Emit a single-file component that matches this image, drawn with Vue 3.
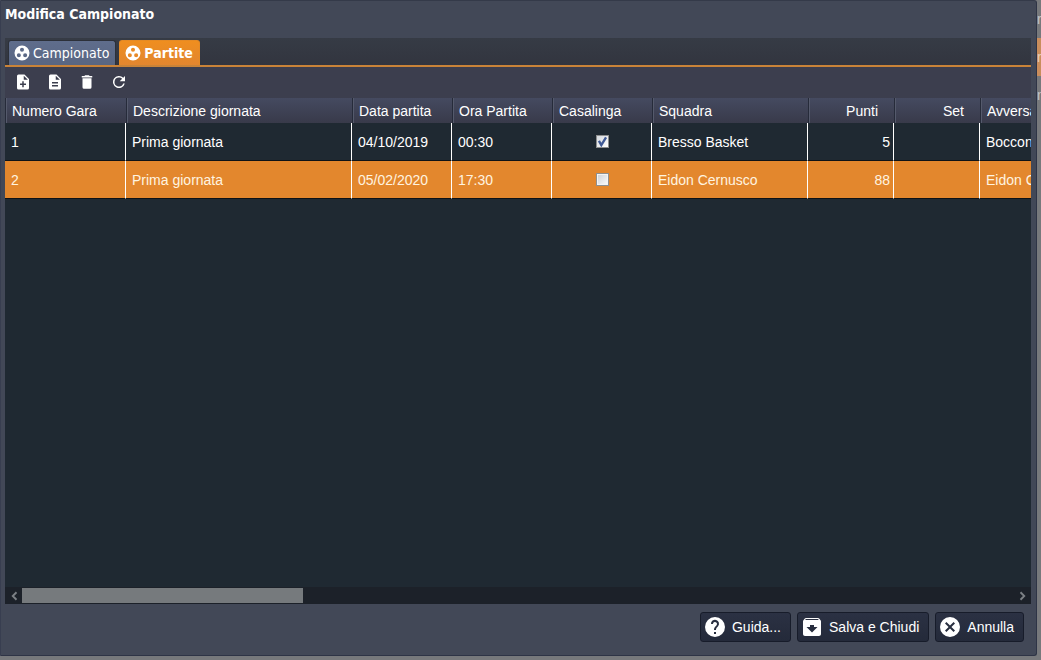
<script setup>
import { ref } from 'vue'

const columns = [
  { key: 'num', label: 'Numero Gara', cls: 'c-num' },
  { key: 'desc', label: 'Descrizione giornata', cls: 'c-desc' },
  { key: 'date', label: 'Data partita', cls: 'c-std' },
  { key: 'time', label: 'Ora Partita', cls: 'c-std' },
  { key: 'home', label: 'Casalinga', cls: 'c-std' },
  { key: 'team', label: 'Squadra', cls: 'c-team' },
  { key: 'points', label: 'Punti', cls: 'c-score', right: true },
  { key: 'set', label: 'Set', cls: 'c-score', right: true },
  { key: 'rival', label: 'Avversario', cls: 'c-team' },
]
const rows = ref([
  { num: '1', desc: 'Prima giornata', date: '04/10/2019', time: '00:30', home: true, team: 'Bresso Basket', points: '5', set: '', rival: 'Bocconi' },
  { num: '2', desc: 'Prima giornata', date: '05/02/2020', time: '17:30', home: false, team: 'Eidon Cernusco', points: '88', set: '', rival: 'Eidon Cernusco' },
])
const selected = ref(1)
const tabs = ['Campionato', 'Partite']
const active = ref(1)
const tools = [
  { label: 'Nuovo', path: 'M14 2H6a2 2 0 0 0-2 2v16a2 2 0 0 0 2 2h12a2 2 0 0 0 2-2V8l-6-6zm2 14h-3v3h-2v-3H8v-2h3v-3h2v3h3v2zm-3-7V3.500L18.500 9H13z' },
  { label: 'Modifica', path: 'M14 2H6a2 2 0 0 0-2 2v16a2 2 0 0 0 2 2h12a2 2 0 0 0 2-2V8l-6-6zm2 16H8v-2h8v2zm0-4H8v-2h8v2zm-3-5V3.500L18.500 9H13z' },
  { label: 'Elimina', path: 'M6 19a2 2 0 0 0 2 2h8a2 2 0 0 0 2-2V7H6v12zM19 4h-3.500l-1-1h-5l-1 1H5v2h14V4z' },
  { label: 'Aggiorna', path: 'M17.650 6.350A8 8 0 1 0 19.730 14h-2.080A6 6 0 1 1 12 6c1.660 0 3.140.69 4.220 1.780L13 11h7V4l-2.350 2.350z' },
]
const actions = [
  { label: 'Guida...', path: 'M12 2a10 10 0 1 0 0 20 10 10 0 0 0 0-20zm1 17h-2v-2h2v2zm2.070-7.750l-.9.920C13.450 12.900 13 13.500 13 15h-2v-.5c0-1.100.45-2.100 1.170-2.830l1.240-1.260A2 2 0 1 0 10 9H8a4 4 0 1 1 7.070 2.250z' },
  { label: 'Salva e Chiudi', path: 'M20.540 5.230l-1.390-1.680C18.880 3.210 18.470 3 18 3H6c-.47 0-.88.21-1.160.55L3.460 5.230C3.170 5.570 3 6.020 3 6.500V19c0 1.100.9 2 2 2h14c1.100 0 2-.9 2-2V6.500c0-.48-.17-.93-.46-1.270zM12 17.500L6.500 12H10v-2h4v2h3.500L12 17.500zM5.120 5l.81-1h12l.94 1H5.120z' },
  { label: 'Annulla', path: 'M12 2a10 10 0 1 0 0 20 10 10 0 0 0 0-20zm5 13.590L15.590 17 12 13.410 8.410 17 7 15.590 10.590 12 7 8.410 8.410 7 12 10.590 15.590 7 17 8.410 13.410 12 17 15.590z' },
]
</script>

<template>
  <div class="backdrop">
    <section class="window" aria-labelledby="window-title">
      <h1 id="window-title">Modifica Campionato</h1>
      <div class="panel">
        <div class="tabs" role="tablist">
          <button
            v-for="(tab, i) in tabs"
            :key="tab"
            type="button"
            role="tab"
            class="tab"
            :class="{ active: active === i }"
            :aria-selected="active === i"
            @click="active = i"
          >
            <svg viewBox="0 0 24 24" aria-hidden="true">
              <path fill-rule="evenodd" d="M12 2a10 10 0 1 0 0 20 10 10 0 0 0 0-20zM12 5a2.700 2.700 0 1 1 0 5.400 2.700 2.700 0 0 1 0-5.400zM7.800 12.200a2.700 2.700 0 1 1 0 5.400 2.700 2.700 0 0 1 0-5.400zM16.200 12.200a2.700 2.700 0 1 1 0 5.400 2.700 2.700 0 0 1 0-5.400z" />
            </svg>
            <span>{{ tab }}</span>
          </button>
        </div>
        <div class="toolbar">
          <button v-for="tool in tools" :key="tool.label" type="button" class="tool" :aria-label="tool.label">
            <svg viewBox="0 0 24 24" aria-hidden="true"><path :d="tool.path" /></svg>
          </button>
        </div>
        <div class="grid">
          <table>
            <colgroup>
              <col v-for="c in columns" :key="c.key" :class="c.cls" />
            </colgroup>
            <thead>
              <tr>
                <th v-for="c in columns" :key="c.key" scope="col" :class="{ right: c.right }">{{ c.label }}</th>
              </tr>
            </thead>
            <tbody>
              <tr v-for="(row, i) in rows" :key="row.num" :class="{ selected: selected === i }" @click="selected = i">
                <td v-for="c in columns" :key="c.key" :class="{ right: c.right, center: c.key === 'home' }">
                  <input v-if="c.key === 'home'" v-model="row.home" type="checkbox" :aria-label="'Casalinga, gara ' + row.num" />
                  <template v-else>{{ row[c.key] }}</template>
                </td>
              </tr>
            </tbody>
          </table>
        </div>
        <div class="scrollbar">
          <button type="button" class="arrow" aria-label="Scorri a sinistra">
            <svg viewBox="0 0 8 8" aria-hidden="true"><path d="M6 1L3 4l3 3" /></svg>
          </button>
          <div class="track"><div class="thumb"></div></div>
          <button type="button" class="arrow" aria-label="Scorri a destra">
            <svg viewBox="0 0 8 8" aria-hidden="true"><path d="M2 1l3 3-3 3" /></svg>
          </button>
        </div>
      </div>
      <footer>
        <button v-for="a in actions" :key="a.label" type="button" class="action">
          <svg viewBox="0 0 24 24" aria-hidden="true"><path fill-rule="evenodd" :d="a.path" /></svg>
          <span>{{ a.label }}</span>
        </button>
      </footer>
    </section>
    <div class="behind" aria-hidden="true">
      <span>r</span>
      <span class="lit">r</span>
      <span>m</span>
    </div>
  </div>
</template>

<style>
body {
  margin: 0;
}
</style>

<style scoped>
* {
  box-sizing: border-box;
}
button {
  margin: 0;
  padding: 0;
  border: 0;
  background: none;
  color: inherit;
  font: inherit;
  cursor: pointer;
}
svg {
  display: block;
  flex: none;
  fill: currentColor;
}
.backdrop {
  display: flex;
  min-height: 100vh;
  padding-bottom: 4px;
  background: #77797c;
  font: 14px/20px "Liberation Sans", Arial, sans-serif;
  color: #fff;
}
.behind {
  flex: none;
  width: 4px;
  overflow: hidden;
  color: #c4c4c6;
}
.behind span {
  display: block;
  height: 38px;
  line-height: 38px;
}
.behind .lit {
  background: #c98d5c;
  color: #e6cdb8;
}
.window {
  flex: 1;
  min-width: 0;
  display: flex;
  flex-direction: column;
  padding: 0 5px 0 4px;
  border: 1px solid #2e3446;
  border-left-color: #383e50;
  border-top-color: #343a49;
  border-radius: 0 3px 3px 0;
  background: #424857;
}
h1 {
  margin: 0;
  height: 37px;
  padding-top: 3px;
  font: bold 14px/20px "DejaVu Sans Condensed", Tahoma, sans-serif;
}
.panel {
  flex: 1;
  min-width: 0;
  display: flex;
  flex-direction: column;
}
.tabs {
  display: flex;
  align-items: flex-end;
  gap: 3px;
  height: 29px;
  padding: 0 3px;
  border-bottom: 2px solid #c98338;
  background: linear-gradient(#363b45, #32353f);
}
.tab {
  display: flex;
  align-items: center;
  gap: 2px;
  height: 25px;
  padding: 0 6px 0 4px;
  border: 1px solid #2c3039;
  border-bottom: 0;
  border-radius: 3px 3px 0 0;
  background: linear-gradient(#5f6d8c, #596682);
  font: 14px/20px "DejaVu Sans Condensed", Tahoma, sans-serif;
}
.tab.active {
  background: linear-gradient(#ef8e1f, #e2862f);
  border-color: #e58a25;
  font-weight: bold;
}
.tab svg {
  width: 18px;
  height: 18px;
}
.toolbar {
  display: flex;
  align-items: center;
  gap: 14px;
  height: 31px;
  padding: 0 9px 2px;
  background: #3c3e4e;
}
.tool svg {
  width: 18px;
  height: 18px;
}
.grid {
  flex: 1;
  overflow: hidden;
  background: #1f2932;
}
table {
  width: 1131px;
  table-layout: fixed;
  border-spacing: 0;
}
.c-num {
  width: 121px;
}
.c-desc {
  width: 226px;
}
.c-std {
  width: 100px;
}
.c-team {
  width: 156px;
}
.c-score {
  width: 86px;
}
th,
td {
  overflow: hidden;
  padding: 0 6px;
  text-align: left;
  white-space: nowrap;
}
th {
  height: 25px;
  border-left: 1px solid #262b3a;
  background: linear-gradient(#454a60, #383a4a);
  box-shadow: inset 1px 0 #555a6c;
  font-weight: normal;
}
th.right {
  padding-right: 16px;
}
td {
  height: 38px;
  border-right: 1px solid #fff;
  border-bottom: 1px solid #0e1216;
}
td.right {
  padding-right: 3px;
}
.right {
  text-align: right;
}
td.center {
  padding: 0 5px 0 7px;
}
.selected td {
  background: #e3872d;
  color: #fff4e0;
}
input {
  appearance: none;
  display: block;
  width: 13px;
  height: 13px;
  margin: 0 auto;
  padding: 1px;
  border: 1px solid #8e8f8f;
  background: linear-gradient(135deg, #d0d4d9, #f8f8f8) content-box, #f4f4f4;
}
input:checked {
  background: url("data:image/svg+xml,%3Csvg xmlns='http://www.w3.org/2000/svg' viewBox='0 0 11 11'%3E%3Cpath d='M2.500 5l2 3.500L8.500 2' fill='none' stroke='%23405a96' stroke-width='2'/%3E%3C/svg%3E") border-box, linear-gradient(135deg, #d5d9df, #fff);
}
.scrollbar {
  display: flex;
  height: 17px;
  background: #1c2129;
}
.arrow {
  display: grid;
  place-items: center;
  width: 17px;
}
.arrow svg {
  width: 10px;
  height: 10px;
  fill: none;
  stroke: #7c8085;
  stroke-width: 1.500;
}
.track {
  flex: 1;
}
.thumb {
  width: 28.300%;
  height: 15px;
  margin-top: 1px;
  background: #767a7d;
}
footer {
  display: flex;
  justify-content: flex-end;
  gap: 6px;
  padding: 8px 7px 13px;
}
.action {
  display: flex;
  align-items: center;
  gap: 5px;
  height: 30px;
  padding: 0 9px 0 2px;
  border: 1px solid #171c2a;
  border-radius: 3px;
  background: linear-gradient(#2b3143, #242a3a);
}
.action svg {
  width: 24px;
  height: 24px;
}
</style>
